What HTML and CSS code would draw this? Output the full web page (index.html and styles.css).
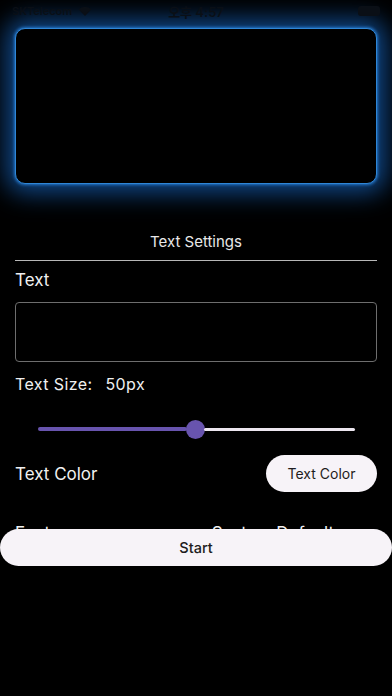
FILE: index.html
```html
<!DOCTYPE html>
<html lang="ko">
<head>
<meta charset="utf-8">
<link rel="stylesheet" href="styles.css">
</head>
<body>
<div class="status">
  <div class="carrier">SKTelecom
    <svg class="wifi" width="14" height="10" viewBox="0 0 14 10"><path d="M7 10 L0.5 3.2 A9.5 9.5 0 0 1 13.5 3.2 Z" fill="#0a0f16"/></svg>
  </div>
  <div class="time">오후 4:57</div>
  <div class="battery"></div>
</div>
<main class="page">
  <div class="preview"></div>
  <div class="section-title">Text Settings</div>
  <div class="divider"></div>
  <div class="label">Text</div>
  <div class="input"></div>
  <div class="label size">Text Size: <span class="num">50px</span></div>
  <div class="slider">
    <div class="track-active"></div>
    <div class="thumb"></div>
    <div class="track-rest"></div>
  </div>
  <div class="row">
    <div class="label">Text Color</div>
    <button class="pill">Text Color</button>
  </div>
  <div class="row font-row">
    <div class="label">Font</div>
    <div class="label value">System Default</div>
  </div>
</main>
<button class="start">Start</button>
</body>
</html>
```
FILE: styles.css
```css
* { box-sizing: border-box; }
html, body { margin: 0; padding: 0; background: #000; }
body {
  width: 392px; height: 696px; overflow: hidden; position: relative;
  font-family: Inter, Roboto, "Noto Sans", "Noto Sans CJK KR", sans-serif;
  color: #f2f2f2;
}
.status {
  position: absolute; top: 0; left: 0; right: 0; height: 22px;
  display: flex; align-items: center; justify-content: space-between;
  padding: 0 12px; z-index: 2; color: #0a0f16; font-size: 12px; font-weight: 600;
}
.carrier { display: flex; align-items: center; gap: 6px; font-size: 11px; width: 100px; }
.time { font-size: 13px; }
.battery { width: 100px; display: flex; justify-content: flex-end; }
.battery::after { content: ""; width: 22px; height: 10px; border-radius: 3px; background: #0a0f16; }
.page { padding: 28px 15px 0; display: flex; flex-direction: column; }
.preview {
  height: 156px; border-radius: 10px; background: #000;
  border: 1.5px solid #2f86d6;
  box-shadow: 0 0 3px 1px rgba(40,130,220,0.8), 0 0 24px 9px rgba(25,110,210,0.65);
}
.section-title { margin-top: 48px; text-align: center; font-size: 15px; line-height: 20px; color: #e8e8e8; }
.divider { margin-top: 8px; height: 1px; background: #b8b8b8; }
.label { font-size: 17px; line-height: 22px; color: #f0f0f0; }
.divider + .label { margin-top: 8px; }
.input { margin-top: 11px; height: 60px; border: 1px solid #6e6e6e; border-radius: 4px; }
.size { margin-top: 11px; font-size: 16px; letter-spacing: 0.4px; }
.num { margin-left: 8px; }
.slider { margin: 24px 22px 0 23px; height: 20px; position: relative; display: flex; align-items: center; }
.track-active { width: 149px; height: 4px; background: #6854ae; border-radius: 2px; }
.thumb { width: 19px; height: 19px; border-radius: 50%; background: #6854ae; margin-left: -1px; }
.track-rest { flex: 1; height: 3px; background: #ece6ef; border-radius: 2px; margin-left: -1px; }
.row { display: flex; align-items: center; justify-content: space-between; margin-top: 16px; }
.pill {
  width: 111px; height: 37px; border: none; border-radius: 19px;
  background: #f7f3f8; color: #1e1c20; font-family: inherit; font-size: 14px; padding: 0;
}
.font-row { margin-top: 30px; }
.value { margin-right: 43px; }
.start {
  position: absolute; left: 0; top: 529px; width: 392px; height: 37px;
  border: none; border-radius: 19px; background: #f7f3f8; color: #1e1c20;
  font-family: inherit; font-size: 14.5px; font-weight: 500; padding: 0;
}
```
